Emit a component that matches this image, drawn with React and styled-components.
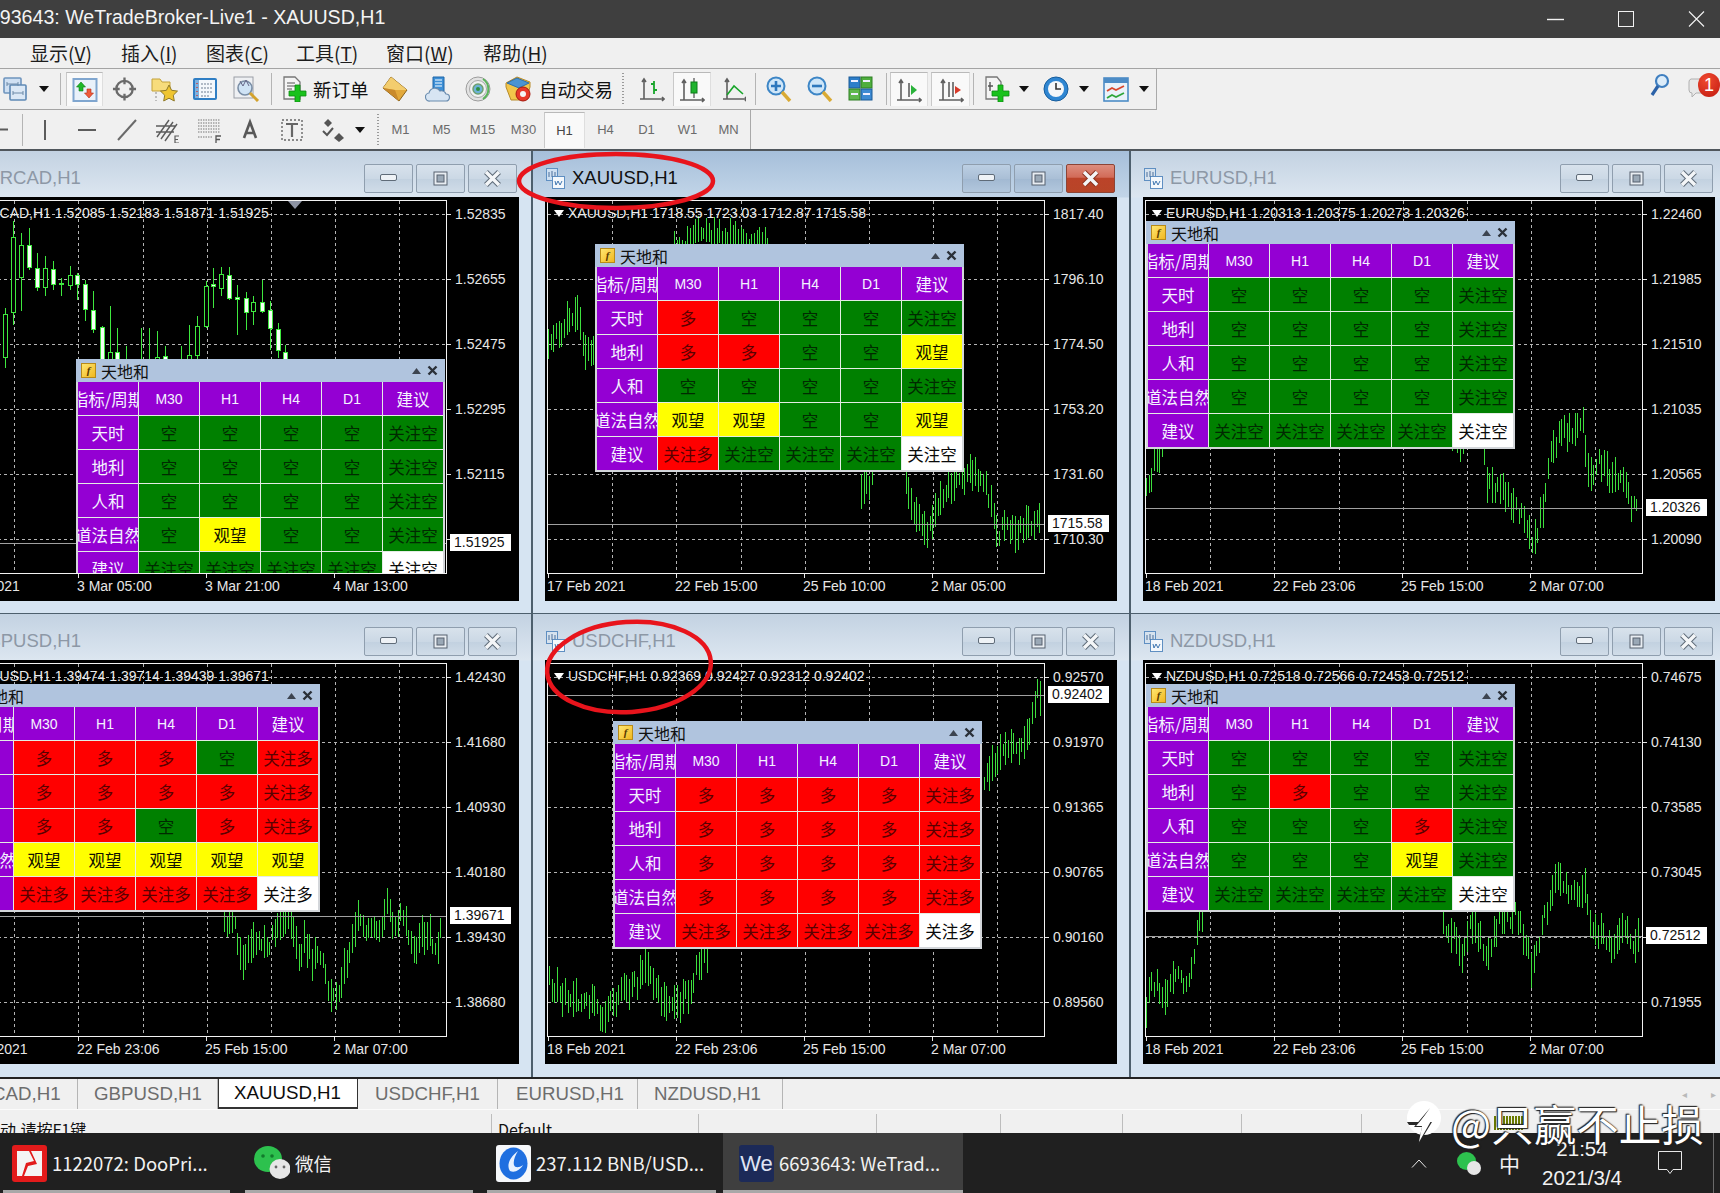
import React from "react";
import styled, { createGlobalStyle } from "styled-components";

const GlobalStyle = createGlobalStyle`
  html, body {
    margin: 0;
    padding: 0;
    background: #f0f0f0;
    overflow: hidden;
  }
  body {
    font-family: "Liberation Sans", "Noto Sans CJK SC", sans-serif;
  }
`;

const CJK = `"Noto Sans CJK SC", "Liberation Sans", sans-serif`;
const LATIN = `"Liberation Sans", "Noto Sans CJK SC", sans-serif`;

const Page = styled.div`
  position: relative;
  width: 1720px;
  height: 1193px;
  overflow: hidden;
  display: flex;
  flex-direction: column;
  background: #f0f0f0;
`;

/* ---------- title bar ---------- */
const TitleBar = styled.div`
  height: 38px;
  flex-shrink: 0;
  background: #3f3f3f;
  display: flex;
  align-items: center;
  overflow: hidden;
  color: #f4f4f4;
`;

const TitleText = styled.div`
  margin: -4px 0 0 -22px;
  font: 19.6px ${LATIN};
  white-space: nowrap;
`;

const WinControls = styled.div`
  margin-left: auto;
  display: flex;
  align-items: center;
  gap: 54px;
  padding-right: 15px;
`;

/* ---------- menu ---------- */
const MenuBar = styled.div`
  height: 30px;
  flex-shrink: 0;
  display: flex;
  align-items: center;
  padding-left: 30px;
  background: #f0f0f0;
`;

const MenuItem = styled.div`
  width: ${(p) => p.$w}px;
  font: 19px ${CJK};
  margin-top: -2px;
  color: #1c1c1c;
  white-space: nowrap;
`;

/* ---------- toolbars ---------- */
const ToolRow = styled.div`
  height: ${(p) => p.$h}px;
  flex-shrink: 0;
  display: flex;
  border-top: ${(p) => (p.$line ? "1px solid #a4a4a4" : "none")};
  box-sizing: border-box;
`;

const ToolGroup = styled.div`
  width: ${(p) => p.$w}px;
  flex-shrink: 0;
  display: flex;
  align-items: center;
  box-sizing: border-box;
  border-right: 1px solid #a9a9a9;
  border-bottom: ${(p) => (p.$line ? "1px solid #a4a4a4" : "none")};
`;

const Tool = styled.div`
  flex-shrink: 0;
  width: ${(p) => p.$w || 26}px;
  height: 34px;
  margin-left: ${(p) => p.$ml || 0}px;
  display: flex;
  align-items: center;
  justify-content: center;
  box-sizing: border-box;
  ${(p) =>
    p.$on &&
    `background: #f9f9f9; border-top: 1px solid #b9b9b9; border-left: 1px solid #c9c9c9; border-right: 1px solid #dedede;`}
`;

const ToolLabel = styled.div`
  flex-shrink: 0;
  width: ${(p) => p.$w}px;
  margin-left: ${(p) => p.$ml}px;
  font: 18.5px ${CJK};
  color: #111;
  white-space: nowrap;
`;

const Caret = styled.div`
  flex-shrink: 0;
  margin-left: ${(p) => p.$ml}px;
  width: 0;
  height: 0;
  border-left: 5px solid transparent;
  border-right: 5px solid transparent;
  border-top: 6px solid #111;
`;

const Sep = styled.div`
  flex-shrink: 0;
  margin-left: ${(p) => p.$ml}px;
  width: 1px;
  height: 32px;
  background: #b4b4b4;
`;

const Grip = styled(Sep)`
  width: 2px;
  background: repeating-linear-gradient(to bottom, #9a9a9a 0 1px, transparent 1px 3px);
`;

const TfButton = styled.div`
  flex-shrink: 0;
  width: 41px;
  height: 36px;
  box-sizing: border-box;
  display: flex;
  align-items: center;
  justify-content: center;
  font: 13px ${LATIN};
  color: ${(p) => (p.$on ? "#444" : "#6b6b6b")};
  ${(p) =>
    p.$on &&
    `background: #f9f9f9; border-top: 1px solid #b9b9b9; border-left: 1px solid #c9c9c9; border-right: 1px solid #dedede;`}
`;

const TfStrip = styled.div`
  display: flex;
  margin-left: 1px;
`;

const CutDash = styled.svg`
  flex-shrink: 0;
`;

const Badge = styled.div`
  position: absolute;
  top: 73px;
  right: 0;
  width: 22px;
  height: 24px;
  border-radius: 50%;
  background: radial-gradient(circle at 40% 30%, #f0492f, #c01a10);
  color: #fff;
  font: 18px ${LATIN};
  display: flex;
  align-items: center;
  justify-content: center;
`;

/* ---------- mdi windows ---------- */
const Mdi = styled.div`
  height: 928px;
  flex-shrink: 0;
  box-sizing: border-box;
  border-top: 2px solid #50565c;
  overflow: hidden;
  background: #4d5f6d;
  display: grid;
  grid-template-columns: repeat(3, 596px);
  grid-template-rows: 462px 463px;
  column-gap: 2px;
  row-gap: 1px;
  margin-left: -65px;
  width: 1800px;
`;

const Window = styled.div`
  display: flex;
  flex-direction: column;
  background: linear-gradient(
    to bottom,
    ${(p) => (p.$active ? "#a6bfda" : "#c3d2e2")} 0,
    ${(p) => (p.$active ? "#c2d5e8" : "#dce6f0")} 46px,
    #d6e4f2 47px
  );
`;

const WinHead = styled.div`
  height: 46px;
  flex-shrink: 0;
  box-sizing: border-box;
  display: flex;
  align-items: center;
  padding: 8px 14px 0 13px;
  gap: 7px;
`;

const WinName = styled.div`
  font: 18.5px ${LATIN};
  color: ${(p) => (p.$active ? "#101010" : "#8d98a6")};
  white-space: nowrap;
`;

const HeadButtons = styled.div`
  margin-left: auto;
  display: flex;
  gap: 3px;
`;

const HeadButton = styled.div`
  width: 49px;
  height: 29px;
  box-sizing: border-box;
  border: 1px solid ${(p) => (p.$danger ? "#8c4436" : "#8f9eae")};
  border-radius: 2px;
  display: flex;
  align-items: center;
  justify-content: center;
  background: ${(p) =>
    p.$danger
      ? "linear-gradient(to bottom, #dd8d7e 0, #d26b58 45%, #bb4329 50%, #b84528 100%)"
      : p.$active
      ? "linear-gradient(to bottom, #bccfe3 0, #aabfd6 50%, #a2b9d2 52%, #b2c7dd 100%)"
      : "linear-gradient(to bottom, #d8e2ec 0, #cbd8e5 50%, #c2d1e0 52%, #d0dce8 100%)"};
`;

const Chart = styled.div`
  margin: 0 12px;
  height: 404px;
  flex-shrink: 0;
  box-sizing: border-box;
  padding: 3px 0 0 2px;
  background: #000;
  display: grid;
  grid-template-columns: 498px 1fr;
  grid-template-rows: 374px 1fr;
`;

const Plot = styled.div`
  position: relative;
  border: 1px solid #f2f2f2;
  box-sizing: border-box;
  overflow: hidden;
`;

const PlotSvg = styled.svg`
  position: absolute;
  left: 0;
  top: 0;
  display: block;
`;

const ChartInfo = styled.div`
  position: absolute;
  left: 20px;
  top: 4px;
  font: 14px ${LATIN};
  color: #ececec;
  white-space: nowrap;
  &::before {
    content: "";
    position: absolute;
    left: -14px;
    top: 5px;
    border-left: 5px solid transparent;
    border-right: 5px solid transparent;
    border-top: 7px solid #fff;
  }
`;

const PriceAxis = styled.div`
  position: relative;
  display: flex;
  flex-direction: column;
  margin-top: -18px;
  height: 392px;
`;

const PriceTick = styled.div`
  position: relative;
  flex-shrink: 0;
  height: 65px;
  line-height: 65px;
  padding-left: 8px;
  font: 14px/65px ${LATIN};
  color: #e6e6e6;
  &::before {
    content: "";
    position: absolute;
    left: 0;
    top: 32px;
    width: 4px;
    height: 1px;
    background: #e6e6e6;
  }
`;

const CurrentPrice = styled.div`
  position: absolute;
  left: 3px;
  top: ${(p) => p.$y + 18 - 9}px;
  width: 61px;
  height: 17px;
  box-sizing: border-box;
  padding-left: 4px;
  background: #fff;
  color: #111;
  font: 14px/17px ${LATIN};
`;

const TimeAxis = styled.div`
  grid-column: 1 / -1;
  display: flex;
`;

const TimeTick = styled.div`
  position: relative;
  width: 128px;
  flex-shrink: 0;
  padding-top: 4px;
  font: 14px ${LATIN};
  color: #e6e6e6;
  white-space: nowrap;
  &::before {
    content: "";
    position: absolute;
    left: 1px;
    top: 0;
    width: 1px;
    height: 4px;
    background: #e6e6e6;
  }
`;

/* ---------- indicator panel ---------- */
const Panel = styled.div`
  position: absolute;
  left: ${(p) => p.$left}px;
  top: ${(p) => p.$top}px;
  width: 369px;
  box-sizing: border-box;
  padding: 0 2px 2px;
  background: #d3d6da;
`;

const PanelHead = styled.div`
  height: 23px;
  margin: 0 -2px;
  padding: 0 7px 0 5px;
  background: #b0c4de;
  display: flex;
  align-items: center;
  color: #111;
  font: 16px ${CJK};
`;

const PanelLogo = styled.span`
  width: 13px;
  height: 13px;
  margin-right: 5px;
  border: 1px solid #b78a18;
  background: linear-gradient(135deg, #ffe670, #f0b820);
  color: #5a3a00;
  font: italic bold 11px/13px "Liberation Serif", serif;
  text-align: center;
`;

const PanelTools = styled.div`
  margin-left: auto;
  display: flex;
  align-items: center;
  gap: 6px;
`;

const PanelGrid = styled.div`
  display: grid;
  grid-template-columns: repeat(6, 60px);
  grid-auto-rows: 33px;
  gap: 1px;
  background: #e4ece4;
`;

const CELL_BG = {
  head: "#9400d3",
  long: "#ff0000",
  short: "#008000",
  wait: "#ffff00",
  last: "#ffffff",
};

const CELL_FG = {
  head: "#f4f4ff",
  long: "#5a0000",
  short: "#002a00",
  wait: "#111100",
  last: "#0a0a0a",
};

const Cell = styled.div`
  display: flex;
  align-items: center;
  justify-content: center;
  overflow: hidden;
  white-space: nowrap;
  font: 16.5px ${CJK};
  background: ${(p) => CELL_BG[p.$kind]};
  color: ${(p) => CELL_FG[p.$kind]};
  ${(p) => p.$latin && `font: 14px ${LATIN};`}
`;

/* ---------- tabs, status, taskbar ---------- */
const TabBar = styled.div`
  height: 33px;
  flex-shrink: 0;
  box-sizing: border-box;
  border-top: 2px solid #222;
  display: flex;
  align-items: stretch;
  position: relative;
  background: #f0f0f0;
  border-bottom: 1px solid #fbfbfb;
`;

const Tab = styled.div`
  flex-shrink: 0;
  width: ${(p) => p.$w}px;
  box-sizing: border-box;
  display: flex;
  align-items: center;
  font: 18.7px ${LATIN};
  white-space: nowrap;
  overflow: hidden;
  padding-left: ${(p) => p.$pad}px;
  color: ${(p) => (p.$active ? "#0c0c0c" : "#6d6d6d")};
  border-right: ${(p) => (p.$active ? "none" : "1px solid #b5b5b5")};
  ${(p) =>
    p.$active &&
    `background: #fff; border: 1px solid #333; border-top: none; border-bottom: 2px solid #333;`}
`;

const CutTabText = styled.span`
  margin-left: -8px;
`;

const TabArrows = styled.div`
  margin-left: auto;
  display: flex;
  align-items: center;
  gap: 24px;
  padding-right: 4px;
  color: #b9b9b9;
  font: 10px ${LATIN};
`;

const StatusBar = styled.div`
  height: 23px;
  flex-shrink: 0;
  display: flex;
  overflow: hidden;
  background: #f0f0f0;
`;

const StatusCell = styled.div`
  flex-shrink: 0;
  width: ${(p) => p.$w}px;
  box-sizing: border-box;
  padding: 3px 0 0 ${(p) => p.$pad || 0}px;
  border-right: 1px solid #bdbdbd;
  margin-top: 4px;
  font: 16px ${CJK};
  color: #111;
  white-space: nowrap;
  overflow: hidden;
`;

const ConnBar = styled.div`
  margin: 6px 0 0 132px;
  width: 30px;
  height: 14px;
  background: repeating-linear-gradient(to right, #6a7a00 0 2px, #f0f0f0 2px 3px);
`;

const Taskbar = styled.div`
  flex: 1;
  background: #202020;
  display: flex;
  align-items: stretch;
  color: #f2f2f2;
`;

const TaskItem = styled.div`
  position: relative;
  flex-shrink: 0;
  margin-left: ${(p) => p.$ml}px;
  width: ${(p) => p.$w}px;
  box-sizing: border-box;
  padding-left: ${(p) => p.$pad}px;
  display: flex;
  align-items: center;
  gap: 5px;
  font: 18.5px ${CJK};
  white-space: nowrap;
  background: ${(p) => (p.$active ? "#3f3f3f" : "transparent")};
  &::after {
    content: "";
    position: absolute;
    left: 0;
    right: 0;
    bottom: 0;
    height: 3px;
    background: #a8a8a8;
  }
`;

const TaskTile = styled.div`
  width: 35px;
  height: 37px;
  border-radius: 3px;
  background: ${(p) => p.$bg};
  color: #dfe4f4;
  font: 22px/37px ${LATIN};
  text-align: center;
  overflow: hidden;
  flex-shrink: 0;
`;

const Tray = styled.div`
  flex-shrink: 0;
  margin-left: ${(p) => p.$ml}px;
  display: flex;
  align-items: center;
  font: ${(p) => p.$size || 18}px ${CJK};
`;

const Clock = styled.div`
  margin-left: 17px;
  width: 90px;
  flex-shrink: 0;
  display: flex;
  flex-direction: column;
  align-items: center;
  justify-content: space-between;
  padding: 4px 0 3px;
  font: 20.5px ${LATIN};
  box-sizing: border-box;
`;

const TrayEdge = styled.div`
  margin-left: 31px;
  width: 1px;
  background: #6a6a6a;
`;

/* ---------- overlays ---------- */
const Circle = styled.svg`
  position: absolute;
  left: ${(p) => p.$x}px;
  top: ${(p) => p.$y}px;
  overflow: visible;
  pointer-events: none;
`;

const Watermark = styled.div`
  position: absolute;
  left: 1406px;
  top: 1100px;
  display: flex;
  align-items: center;
  gap: 9px;
  color: #fff;
  font: 42.5px/1 ${CJK};
  white-space: nowrap;
  text-shadow: 0 0 2px #222, 1px 1px 1px #222, -1px -1px 1px #222;
`;

/* ---------- toolbar icons ---------- */
const Svg = ({ w = 26, h = 26, children }) => (
  <svg width={w} height={h} viewBox={`0 0 ${w} ${h}`} fill="none">
    {children}
  </svg>
);

const PlusMark = ({ x = 0, y = 0, c = "#19c21c" }) => (
  <path
    d={`M${x + 6} ${y}h5v6h6v5h-6v6h-5v-6h-6v-5h6z`}
    fill={c}
    stroke="#0c8a12"
    strokeWidth=".8"
  />
);

const Axis = () => (
  <path d="M5 4v19M1 23h24M3 6l2-3 2 3M23 21l2 2-2 2" stroke="#5f5f5f" strokeWidth="1.6" />
);

const Icons = {
  cascade: (
    <Svg w={24}>
      <rect x="1" y="2" width="17" height="15" rx="1" fill="#cfe0f3" stroke="#6e94bd" strokeWidth="1.6" />
      <rect x="7" y="9" width="16" height="15" rx="1" fill="#dbe8f6" stroke="#5f89b5" strokeWidth="1.6" />
      <path d="M4 8h11M4 6v4M15 6v4M10 17h10M10 15v4M20 15v4" stroke="#6d8aa8" />
    </Svg>
  ),
  market: (
    <Svg>
      <rect x="1.5" y="2" width="23" height="22" fill="#e9f1fa" stroke="#80a6cf" strokeWidth="2" />
      <path d="M9 5l4.5 5H11v4H7v-4H4.5z" fill="#1fb82a" stroke="#0e7d17" strokeWidth=".6" />
      <path d="M17 21l-4.5-5H15v-4h4v4h2.5z" fill="#ee5a3a" stroke="#b42e18" strokeWidth=".6" />
    </Svg>
  ),
  cross: (
    <Svg>
      <circle cx="13" cy="13" r="8.5" stroke="#6a6a6a" strokeWidth="2.4" />
      <path d="M13 1v7M13 18v7M1 13h7M18 13h7" stroke="#6a6a6a" strokeWidth="2.4" />
    </Svg>
  ),
  folder: (
    <Svg w={27}>
      <path d="M1 3h8l2 3h8v9H1z" fill="#f7dc7c" stroke="#c4a23a" />
      <path d="M18 9l2.6 5.3 5.9.8-4.2 4.1 1 5.8-5.3-2.8-5.3 2.8 1-5.8-4.2-4.1 5.9-.8z" fill="#efc531" stroke="#8f7a2a" />
      <path d="M5 16v9" stroke="#888" strokeDasharray="2 2" />
    </Svg>
  ),
  nav: (
    <Svg>
      <rect x="1" y="2" width="24" height="22" rx="2" fill="#2f7ec4" />
      <rect x="3" y="4" width="20" height="18" fill="#f4f8fc" />
      <rect x="3" y="4" width="4" height="18" fill="#7fb2df" />
      <path d="M9 8h12M9 12h12M9 16h12M9 20h8" stroke="#6f7f92" strokeDasharray="2 1" />
      <path d="M5 7v14" stroke="#c44" strokeDasharray="1 3" strokeWidth="1.5" />
    </Svg>
  ),
  tester: (
    <Svg w={27}>
      <rect x="1" y="1" width="19" height="21" fill="#eef0f3" stroke="#9a9ea6" />
      <circle cx="12" cy="12" r="7" fill="#cfe3f5" stroke="#7a8ea6" strokeWidth="1.6" />
      <path d="M7 5l3 5 3-6 3 6" stroke="#668" />
      <path d="M17 17l8 8" stroke="#d3a22c" strokeWidth="3" />
    </Svg>
  ),
  order: (
    <Svg w={25}>
      <path d="M2 1h11l5 5v17H2z" fill="#f4f4f4" stroke="#777" strokeWidth="1.3" />
      <path d="M5 7h8M5 10h8M5 13h5" stroke="#555" strokeWidth="1.2" />
      <PlusMark x={7} y={9} />
    </Svg>
  ),
  diamond: (
    <Svg w={28}>
      <path d="M10 1l16 13-8 11L2 12z" fill="#e3a93b" stroke="#87611a" />
      <path d="M10 1l16 13H14L2 12z" fill="#f3cd6e" />
      <path d="M2 12l12 2 4 11z" fill="#c98a2c" />
    </Svg>
  ),
  db: (
    <Svg>
      <path d="M8 1h11v14H8z" fill="#3d8fd6" stroke="#1e67a8" />
      <path d="M10 4h7M10 7h7M10 10h7" stroke="#bcdcf5" strokeWidth="1.4" />
      <path d="M5 25a4 4 0 0 1-1-8 6 6 0 0 1 11-2 5 5 0 0 1 6 3 3.5 3.5 0 0 1 0 7z" fill="#d7e5f3" stroke="#6a8cae" strokeWidth="1.2" />
    </Svg>
  ),
  signal: (
    <Svg>
      <circle cx="13" cy="13" r="12" fill="#e2e2e2" stroke="#9c9c9c" />
      <circle cx="13" cy="13" r="8.5" fill="#f2f2f2" stroke="#a8a8a8" />
      <circle cx="13" cy="13" r="5" fill="#6db2d8" stroke="#6f9f6f" strokeWidth="1.5" />
      <path d="M18 3a12 12 0 0 1 0 20" stroke="#5ab45a" strokeWidth="2" />
      <circle cx="13" cy="13" r="2" fill="#2f8f3f" />
    </Svg>
  ),
  auto: (
    <Svg>
      <path d="M1 7l11-6 13 5v5l-4 13H6L1 11z" fill="#f2c64a" stroke="#b78a28" />
      <path d="M2 7l10-5 12 5-10 5z" fill="#4c94d2" stroke="#2f6ea8" />
      <circle cx="18" cy="18" r="7" fill="#e8392a" stroke="#a61a10" />
      <circle cx="18" cy="18" r="3" fill="#f5f5f5" />
    </Svg>
  ),
  bars: (
    <Svg>
      <Axis />
      <path d="M15 5v13M12 8h3M15 14h3" stroke="#18a52a" strokeWidth="1.8" />
    </Svg>
  ),
  candle: (
    <Svg>
      <Axis />
      <path d="M15 1v20" stroke="#666" strokeWidth="1.4" />
      <rect x="12" y="5" width="6" height="11" fill="#1fb32e" stroke="#0d7c18" />
    </Svg>
  ),
  line: (
    <Svg w={24}>
      <Axis />
      <path d="M5 19l7-9 9 8" stroke="#18a52a" strokeWidth="1.6" />
    </Svg>
  ),
  zoomIn: (
    <Svg>
      <circle cx="10" cy="10" r="8.5" fill="#cfe6f8" stroke="#3d86c6" strokeWidth="2" />
      <path d="M10 5v10M5 10h10" stroke="#2e78bd" strokeWidth="2.6" />
      <path d="M16 16l8 9" stroke="#d9aa34" strokeWidth="3.4" />
    </Svg>
  ),
  zoomOut: (
    <Svg>
      <circle cx="10" cy="10" r="8.5" fill="#cfe6f8" stroke="#3d86c6" strokeWidth="2" />
      <path d="M5 10h10" stroke="#2e78bd" strokeWidth="2.6" />
      <path d="M16 16l8 9" stroke="#d9aa34" strokeWidth="3.4" />
    </Svg>
  ),
  tile: (
    <Svg w={25}>
      <rect x="1" y="1" width="11" height="11" fill="#2d7ec9" stroke="#1a5a96" />
      <rect x="13" y="1" width="11" height="11" fill="#4fae3e" stroke="#2d7e22" />
      <rect x="1" y="13" width="11" height="11" fill="#5fb84d" stroke="#2d7e22" />
      <rect x="13" y="13" width="11" height="11" fill="#3d8ad2" stroke="#1a5a96" />
      <path d="M3 5h7M15 5h7M3 18h7M15 18h7" stroke="#eef" strokeWidth="2" />
    </Svg>
  ),
  scroll: (
    <Svg>
      <Axis />
      <path d="M13 6v14" stroke="#555" strokeWidth="1.5" />
      <path d="M15 8l6 5-6 5z" fill="#2ab23a" />
    </Svg>
  ),
  shift: (
    <Svg>
      <Axis />
      <path d="M11 5v15M15 5v15" stroke="#555" strokeWidth="1.5" />
      <path d="M23 13l-6-4v8z" fill="#d83a2a" />
    </Svg>
  ),
  newChart: (
    <Svg>
      <path d="M2 1h11l4 5v17H2z" fill="#f4f4f4" stroke="#777" strokeWidth="1.3" />
      <path d="M6 6v9M4 10h5" stroke="#555" strokeWidth="1.4" />
      <PlusMark x={8} y={9} />
    </Svg>
  ),
  clock: (
    <Svg>
      <circle cx="13" cy="13" r="12" fill="#2f86d2" stroke="#175d9c" />
      <circle cx="13" cy="13" r="8" fill="#f5f7f9" />
      <path d="M13 7v6h5" stroke="#333" strokeWidth="1.6" />
    </Svg>
  ),
  template: (
    <Svg>
      <rect x="1" y="2" width="24" height="23" fill="#eaf2fa" stroke="#4d8cc6" strokeWidth="1.6" />
      <rect x="1" y="2" width="24" height="5" fill="#4d8cc6" />
      <path d="M4 15l5-3 4 2 8-4" stroke="#d8462c" strokeWidth="1.8" />
      <path d="M4 22l5-3 4 2 8-4" stroke="#2fa63a" strokeWidth="1.8" />
    </Svg>
  ),
  search: (
    <Svg w={20}>
      <circle cx="12" cy="8" r="6" fill="#dcecf9" stroke="#3f7fc0" strokeWidth="2.2" />
      <path d="M8 13l-6 9" stroke="#2c62a8" strokeWidth="3.2" />
    </Svg>
  ),
  chat: (
    <Svg w={22}>
      <path d="M3 6h13a3 3 0 0 1 3 3v8a3 3 0 0 1-3 3h-8l-4 4v-4a3 3 0 0 1-3-3V9a3 3 0 0 1 2-3z" fill="#e8e8e8" stroke="#b0b0b0" />
    </Svg>
  ),
  vert: (
    <Svg>
      <path d="M13 3v20" stroke="#5c5c5c" strokeWidth="2" />
    </Svg>
  ),
  horiz: (
    <Svg>
      <path d="M4 13h18" stroke="#5c5c5c" strokeWidth="2" />
    </Svg>
  ),
  diag: (
    <Svg>
      <path d="M4 23L22 3" stroke="#6a6a6a" strokeWidth="2" />
    </Svg>
  ),
  fibo: (
    <Svg>
      <path d="M2 20L14 3M6 22L18 5M10 24L22 7M1 9h20M1 15h18" stroke="#5c5c5c" strokeWidth="1.4" />
      <path d="M24 19h-4v7h4M20 22.5h3" stroke="#5c5c5c" strokeWidth="1.2" />
    </Svg>
  ),
  gridF: (
    <Svg>
      <path d="M2 3h22M2 6h22M2 9h22M2 12h22M2 15h22M2 20h14" stroke="#777" strokeWidth="1.1" strokeDasharray="1.5 1" />
      <path d="M25 19h-5v7M20 22.5h4" stroke="#555" strokeWidth="1.3" />
    </Svg>
  ),
  textA: (
    <Svg>
      <path d="M7 21L13 5l6 16M9 16h8" stroke="#585858" strokeWidth="2.6" />
    </Svg>
  ),
  textT: (
    <Svg>
      <rect x="3" y="3" width="20" height="20" stroke="#666" strokeDasharray="2 2" strokeWidth="1.4" />
      <path d="M7 7h12M13 7v13" stroke="#666" strokeWidth="2.2" />
    </Svg>
  ),
  marks: (
    <Svg>
      <path d="M8 2l4 4-4 4-4-4z" fill="#555" />
      <path d="M3 14l4 4 6-7" stroke="#555" strokeWidth="2" />
      <path d="M19 16l5 5-5 4-5-4z" fill="#555" />
    </Svg>
  ),
};

const WinDocIcon = ({ active }) => (
  <svg width="19" height="21" viewBox="0 0 19 21" fill="none">
    <rect x=".5" y=".5" width="11" height="12" fill={active ? "#cfe0f2" : "#d6e2ee"} stroke="#5f8fc2" />
    <rect x="6.5" y="8.5" width="12" height="12" fill="#f4f8fc" stroke="#5f8fc2" />
    <path d="M3 4v5M6 3v6M9 4v4" stroke="#4a6f9a" />
    <path d="M9 13l1 4 2-4 2 4 2-4" stroke="#3f76b0" />
  </svg>
);

const MinGlyph = () => (
  <svg width="17" height="8" viewBox="0 0 17 8">
    <rect x=".5" y=".5" width="16" height="6" rx="1.5" fill="#eef2f6" stroke="#5f6b78" />
  </svg>
);

const MaxGlyph = () => (
  <svg width="15" height="15" viewBox="0 0 15 15" fill="none">
    <rect x="1" y="1" width="13" height="13" fill="#e8edf2" stroke="#56616e" />
    <rect x="4" y="4" width="7" height="7" fill="#9aa8b6" stroke="#56616e" />
  </svg>
);

const CloseGlyph = ({ danger }) => (
  <svg width="19" height="17" viewBox="0 0 19 17" fill="none">
    <path d="M3 2l13 13M16 2L3 15" stroke={danger ? "#8a3422" : "#5f6b78"} strokeWidth="5.4" />
    <path d="M3 2l13 13M16 2L3 15" stroke="#f4f6f8" strokeWidth="3.4" />
  </svg>
);

/* ---------- chart data ---------- */
const TICKS_X = [64, 128, 193, 257, 321, 385, 449];
const TICKS_Y = [14, 79, 144, 209, 274, 339];

const makeRand = (start) => {
  let seed = start;
  return () => {
    seed = (seed * 16807) % 2147483647;
    return seed / 2147483647;
  };
};

// turn a rough (x, mid price) trace into a path of thin vertical bars
const barPath = (traces, seedStart, len = 28) => {
  const rand = makeRand(seedStart);
  let d = "";
  traces.forEach((trace) => {
    let seg = 0;
    for (let x = trace[0][0]; x <= trace[trace.length - 1][0]; x += 2.67) {
      while (seg < trace.length - 2 && x > trace[seg + 1][0]) seg++;
      const [x0, y0] = trace[seg];
      const [x1, y1] = trace[seg + 1];
      const mid = y0 + ((y1 - y0) * (x - x0)) / (x1 - x0) + (rand() - 0.5) * 14;
      const half = (len / 2) * (0.4 + rand() * 0.9);
      d += `M${Math.round(x) + 0.5} ${Math.round(mid - half)}V${Math.round(mid + half)}`;
    }
  });
  return d;
};

// x, wick top, wick bottom, body top, body bottom, solid body
const CANDLES = [
  [15, 465, 645, 485, 615, 0], [39, 205, 515, 255, 480, 0], [62, 240, 475, 280, 375, 0],
  [85, 225, 350, 280, 345, 1], [108, 300, 415, 347, 405, 1], [132, 310, 430, 348, 405, 0],
  [155, 325, 410, 350, 395, 1], [178, 375, 430, 392, 396, 0], [202, 340, 410, 368, 398, 0],
  [225, 360, 440, 370, 397, 1], [248, 380, 505, 395, 472, 1], [271, 415, 540, 473, 532, 1],
  [295, 520, 660, 525, 640, 1], [318, 460, 660, 600, 640, 0], [341, 525, 660, 600, 640, 1],
  [365, 580, 660, 625, 650, 0], [410, 525, 660, 0, 0, 0], [434, 525, 660, 0, 0, 0],
  [457, 535, 660, 615, 650, 0], [480, 580, 660, 613, 650, 1], [527, 580, 660, 0, 0, 0],
  [550, 515, 660, 610, 650, 0], [573, 490, 620, 523, 610, 0], [597, 385, 525, 403, 523, 0],
  [620, 345, 465, 397, 403, 1], [643, 343, 430, 365, 407, 0], [666, 342, 440, 368, 437, 1],
  [689, 395, 545, 435, 442, 1], [713, 418, 530, 438, 480, 1], [736, 430, 515, 450, 478, 0],
  [760, 380, 480, 450, 478, 1], [783, 445, 590, 473, 528, 1], [806, 510, 615, 530, 595, 1],
  [828, 575, 660, 600, 650, 1],
];

const CandleLayer = () => (
  <g stroke="#3ee83e" strokeWidth="1" shapeRendering="crispEdges">
    {CANDLES.map(([xz, wt, wb, bt, bb, solid]) => {
      const x = Math.round(xz / 2.904 + 50) + 0.5;
      const y = (v) => Math.round(v / 3 - 49) + 0.5;
      return (
        <g key={xz}>
          <path d={`M${x} ${y(wt)}V${y(wb)}`} />
          {bb > 0 && (
            <rect
              x={x - 2}
              y={y(bt)}
              width="4"
              height={y(bb) - y(bt)}
              fill={solid ? "#f6fff6" : "#000"}
            />
          )}
        </g>
      );
    })}
  </g>
);

const SHORT_ROW = "空 空 空 空 关注空";
const SHORT_END = "关注空 关注空 关注空 关注空 关注空";
const LONG_ROW = "多 多 多 多 关注多";
const LONG_END = "关注多 关注多 关注多 关注多 关注多";

const WINDOWS = [
  {
    name: "EURCAD,H1",
    info: "EURCAD,H1 1.52085 1.52183 1.51871 1.51925",
    prices: ["1.52835", "1.52655", "1.52475", "1.52295", "1.52115", ""],
    current: "1.51925",
    currentY: 343,
    times: ["2 Mar 2021", "3 Mar 05:00", "3 Mar 21:00", "4 Mar 13:00"],
    candles: true,
    marker: true,
    panel: [126, 158],
    rows: [SHORT_ROW, SHORT_ROW, SHORT_ROW, "空 观望 空 空 关注空", SHORT_END],
  },
  {
    name: "XAUUSD,H1",
    active: true,
    info: "XAUUSD,H1 1718.55 1723.03 1712.87 1715.58",
    prices: ["1817.40", "1796.10", "1774.50", "1753.20", "1731.60", "1710.30"],
    current: "1715.58",
    currentY: 324,
    times: ["17 Feb 2021", "22 Feb 15:00", "25 Feb 10:00", "2 Mar 05:00"],
    traces: [
      [[0, 150], [8, 135], [23, 115], [30, 110], [36, 145], [50, 150]],
      [[126, 52], [150, 34], [180, 38], [216, 44], [224, 60]],
      [[313, 291], [322, 280], [326, 258]],
      [[355, 258], [361, 301], [380, 331], [399, 286], [426, 270], [441, 294], [450, 342], [456, 320], [467, 334], [482, 324], [493, 316]],
    ],
    panel: [47, 43],
    rows: [
      "多 空 空 空 关注空",
      "多 多 空 空 观望",
      SHORT_ROW,
      "观望 观望 空 空 观望",
      "关注多 关注空 关注空 关注空 关注空",
    ],
  },
  {
    name: "EURUSD,H1",
    info: "EURUSD,H1 1.20313 1.20375 1.20273 1.20326",
    prices: ["1.22460", "1.21985", "1.21510", "1.21035", "1.20565", "1.20090"],
    current: "1.20326",
    currentY: 308,
    times: ["18 Feb 2021", "22 Feb 23:06", "25 Feb 15:00", "2 Mar 07:00"],
    traces: [
      [[0, 293], [10, 258], [18, 245]],
      [[306, 240], [316, 245], [320, 225]],
      [[338, 250], [340, 286], [361, 293], [380, 323], [387, 348], [395, 313], [401, 280], [404, 245], [418, 232], [433, 228], [436, 215], [442, 268], [446, 285], [451, 255], [465, 280], [478, 280], [485, 302], [492, 307]],
    ],
    panel: [0, 20],
    rows: [SHORT_ROW, SHORT_ROW, SHORT_ROW, SHORT_ROW, SHORT_END],
  },
  {
    name: "GBPUSD,H1",
    info: "GBPUSD,H1 1.39474 1.39714 1.39439 1.39671",
    prices: ["1.42430", "1.41680", "1.40930", "1.40180", "1.39430", "1.38680"],
    current: "1.39671",
    currentY: 253,
    times: ["18 Feb 2021", "22 Feb 23:06", "25 Feb 15:00", "2 Mar 07:00"],
    traces: [
      [[274, 259], [284, 262], [288, 287], [295, 300], [305, 272], [318, 282], [332, 253], [342, 268], [348, 292], [355, 277], [362, 295], [371, 295], [379, 327], [389, 332], [396, 300], [401, 274], [408, 254], [416, 263], [430, 272], [436, 239], [443, 259], [450, 250], [458, 266], [465, 283], [479, 263], [485, 286], [492, 265]],
    ],
    panel: [1, 20],
    rows: [
      "多 多 多 空 关注多",
      LONG_ROW,
      "多 多 空 多 关注多",
      "观望 观望 观望 观望 观望",
      LONG_END,
    ],
  },
  {
    name: "USDCHF,H1",
    info: "USDCHF,H1 0.92369 0.92427 0.92312 0.92402",
    prices: ["0.92570", "0.91970", "0.91365", "0.90765", "0.90160", "0.89560"],
    current: "0.92402",
    currentY: 32,
    times: ["18 Feb 2021", "22 Feb 23:06", "25 Feb 15:00", "2 Mar 07:00"],
    traces: [
      [[1, 318], [9, 327], [28, 335], [43, 340], [54, 352], [68, 335], [88, 320], [100, 303], [111, 332], [133, 340], [145, 318], [148, 297], [160, 290]],
      [[436, 119], [446, 100], [459, 83], [476, 83], [481, 72], [484, 45], [489, 30], [493, 37]],
    ],
    panel: [65, 57],
    rows: [LONG_ROW, LONG_ROW, LONG_ROW, LONG_ROW, LONG_END],
  },
  {
    name: "NZDUSD,H1",
    info: "NZDUSD,H1 0.72518 0.72566 0.72453 0.72512",
    prices: ["0.74675", "0.74130", "0.73585", "0.73045", "", "0.71955"],
    current: "0.72512",
    currentY: 273,
    times: ["18 Feb 2021", "22 Feb 23:06", "25 Feb 15:00", "2 Mar 07:00"],
    traces: [
      [[0, 355], [4, 320], [11, 318], [17, 343], [23, 325], [32, 310], [40, 325], [47, 303], [51, 273], [56, 247], [60, 225]],
      [[297, 259], [308, 273], [316, 292], [324, 250], [342, 294], [352, 257], [369, 250], [380, 278], [386, 307], [395, 265], [403, 239], [410, 217], [421, 222], [431, 233], [438, 223], [446, 272], [455, 267], [465, 289], [480, 260], [487, 283], [492, 270]],
    ],
    panel: [0, 20],
    rows: [
      SHORT_ROW,
      "空 多 空 空 关注空",
      "空 空 空 多 关注空",
      "空 空 空 观望 关注空",
      SHORT_END,
    ],
  },
];

const cellKind = (text) => {
  if (text.includes("多")) return "long";
  if (text.includes("空")) return "short";
  return "wait";
};

const SignalPanel = ({ left, top, rows }) => {
  const heads = ["指标/周期", "M30", "H1", "H4", "D1", "建议"];
  const labels = ["天时", "地利", "人和", "道法自然", "建议"];
  return (
    <Panel $left={left} $top={top}>
      <PanelHead>
        <PanelLogo>f</PanelLogo>
        天地和
        <PanelTools>
          <svg width="9" height="6" viewBox="0 0 9 6">
            <path d="M4.5 0L9 6H0z" fill="#3c4450" />
          </svg>
          <svg width="11" height="11" viewBox="0 0 11 11">
            <path d="M1.5 1.5l8 8M9.5 1.5l-8 8" stroke="#2a3038" strokeWidth="2.4" />
          </svg>
        </PanelTools>
      </PanelHead>
      <PanelGrid>
        {heads.map((h) => (
          <Cell key={h} $kind="head" $latin={/^[A-Z]/.test(h)}>
            {h}
          </Cell>
        ))}
        {rows.map((row, r) => (
          <React.Fragment key={labels[r]}>
            <Cell $kind="head">{labels[r]}</Cell>
            {row.split(" ").map((text, c) => (
              <Cell key={c} $kind={r === 4 && c === 4 ? "last" : cellKind(text)}>
                {text}
              </Cell>
            ))}
          </React.Fragment>
        ))}
      </PanelGrid>
    </Panel>
  );
};

const ChartWindow = ({ data, seed }) => (
  <Window $active={data.active}>
    <WinHead>
      <WinDocIcon active={data.active} />
      <WinName $active={data.active}>{data.name}</WinName>
      <HeadButtons>
        <HeadButton $active={data.active}>
          <MinGlyph />
        </HeadButton>
        <HeadButton $active={data.active}>
          <MaxGlyph />
        </HeadButton>
        <HeadButton $active={data.active} $danger={data.active}>
          <CloseGlyph danger={data.active} />
        </HeadButton>
      </HeadButtons>
    </WinHead>
    <Chart>
      <Plot>
        <PlotSvg width="496" height="372" viewBox="0 0 496 372" fill="none">
          <g stroke="#b4b4b4" strokeDasharray="3 3" shapeRendering="crispEdges">
            {TICKS_X.map((x) => (
              <path key={x} d={`M${x + 0.5} 0V372`} />
            ))}
            {TICKS_Y.map((y) => (
              <path key={y} d={`M0 ${y - 0.5}H496`} />
            ))}
          </g>
          {data.candles ? (
            <CandleLayer />
          ) : (
            <path
              d={barPath(data.traces, seed)}
              stroke="#3ddf3d"
              strokeWidth="1"
              shapeRendering="crispEdges"
            />
          )}
          <path d={`M0 ${data.currentY - 0.5}H496`} stroke="#a0a0a0" shapeRendering="crispEdges" />
          {data.marker && <path d="M338 0h14l-7 8z" fill="#8d93a3" />}
        </PlotSvg>
        <ChartInfo>{data.info}</ChartInfo>
        <SignalPanel left={data.panel[0]} top={data.panel[1]} rows={data.rows} />
      </Plot>
      <PriceAxis>
        {data.prices.map((p, i) => (
          <PriceTick key={i}>{p}</PriceTick>
        ))}
        <CurrentPrice $y={data.currentY}>{data.current}</CurrentPrice>
      </PriceAxis>
      <TimeAxis>
        {data.times.map((t) => (
          <TimeTick key={t}>{t}</TimeTick>
        ))}
      </TimeAxis>
    </Chart>
  </Window>
);

const MENU = [
  ["显示", "V", 91],
  ["插入", "I", 85],
  ["图表", "C", 90],
  ["工具", "T", 90],
  ["窗口", "W", 97],
  ["帮助", "H", 70],
];

const TIMEFRAMES = ["M1", "M5", "M15", "M30", "H1", "H4", "D1", "W1", "MN"];

export default function App() {
  return (
    <Page>
      <GlobalStyle />
      <TitleBar>
        <TitleText>6693643: WeTradeBroker-Live1 - XAUUSD,H1</TitleText>
        <WinControls>
          <svg width="17" height="3" viewBox="0 0 17 3">
            <path d="M0 1.5h17" stroke="#f2f2f2" strokeWidth="1.4" />
          </svg>
          <svg width="16" height="16" viewBox="0 0 16 16" fill="none">
            <rect x=".5" y=".5" width="15" height="15" stroke="#f2f2f2" />
          </svg>
          <svg width="17" height="16" viewBox="0 0 17 16">
            <path d="M1 .5l15 15M16 .5l-15 15" stroke="#f2f2f2" strokeWidth="1.1" />
          </svg>
        </WinControls>
      </TitleBar>

      <MenuBar>
        {MENU.map(([label, key, w]) => (
          <MenuItem key={key} $w={w}>
            {label}(<u>{key}</u>)
          </MenuItem>
        ))}
      </MenuBar>

      <ToolRow $h={42} $line>
        <ToolGroup $w={1157} $line>
          <Tool $ml={3} $w={24}>{Icons.cascade}</Tool>
          <Caret $ml={12} />
          <Sep $ml={11} />
          <Tool $ml={5} $w={37} $on>{Icons.market}</Tool>
          <Tool $ml={9} $w={25}>{Icons.cross}</Tool>
          <Tool $ml={14} $w={27}>{Icons.folder}</Tool>
          <Tool $ml={14}>{Icons.nav}</Tool>
          <Tool $ml={15} $w={27}>{Icons.tester}</Tool>
          <Sep $ml={11} />
          <Tool $ml={10} $w={25}>{Icons.order}</Tool>
          <ToolLabel $ml={6} $w={57}>新订单</ToolLabel>
          <Tool $ml={11} $w={28}>{Icons.diamond}</Tool>
          <Tool $ml={16}>{Icons.db}</Tool>
          <Tool $ml={14}>{Icons.signal}</Tool>
          <Tool $ml={14}>{Icons.auto}</Tool>
          <ToolLabel $ml={8} $w={74}>自动交易</ToolLabel>
          <Grip $ml={9} />
          <Tool $ml={15}>{Icons.bars}</Tool>
          <Tool $ml={8} $w={38} $on>{Icons.candle}</Tool>
          <Tool $ml={11} $w={24}>{Icons.line}</Tool>
          <Sep $ml={9} />
          <Tool $ml={10}>{Icons.zoomIn}</Tool>
          <Tool $ml={15}>{Icons.zoomOut}</Tool>
          <Tool $ml={15} $w={25}>{Icons.tile}</Tool>
          <Sep $ml={13} />
          <Tool $ml={3} $w={38} $on>{Icons.scroll}</Tool>
          <Tool $ml={3} $w={39} $on>{Icons.shift}</Tool>
          <Sep $ml={3} />
          <Tool $ml={10}>{Icons.newChart}</Tool>
          <Caret $ml={9} />
          <Tool $ml={14}>{Icons.clock}</Tool>
          <Caret $ml={10} />
          <Tool $ml={14}>{Icons.template}</Tool>
          <Caret $ml={10} />
        </ToolGroup>
        <Tool $ml={493} $w={20}>{Icons.search}</Tool>
        <Tool $ml={18} $w={22}>{Icons.chat}</Tool>
      </ToolRow>
      <Badge>1</Badge>

      <ToolRow $h={39}>
        <ToolGroup $w={751}>
          <CutDash width="8" height="3" viewBox="0 0 8 3">
            <path d="M0 1.5h8" stroke="#5c5c5c" strokeWidth="2" />
          </CutDash>
          <Sep $ml={14} />
          <Tool $ml={9}>{Icons.vert}</Tool>
          <Tool $ml={16}>{Icons.horiz}</Tool>
          <Tool $ml={14}>{Icons.diag}</Tool>
          <Tool $ml={15}>{Icons.fibo}</Tool>
          <Tool $ml={15}>{Icons.gridF}</Tool>
          <Tool $ml={15}>{Icons.textA}</Tool>
          <Tool $ml={16}>{Icons.textT}</Tool>
          <Tool $ml={15}>{Icons.marks}</Tool>
          <Caret $ml={9} />
          <Grip $ml={12} />
          <TfStrip>
            {TIMEFRAMES.map((tf) => (
              <TfButton key={tf} $on={tf === "H1"}>
                {tf}
              </TfButton>
            ))}
          </TfStrip>
        </ToolGroup>
      </ToolRow>

      <Mdi>
        {WINDOWS.map((w, i) => (
          <ChartWindow key={w.name} data={w} seed={i * 977 + 131} />
        ))}
      </Mdi>

      <TabBar>
        <Tab $w={78} $pad={0}>
          <CutTabText>CAD,H1</CutTabText>
        </Tab>
        <Tab $w={140} $pad={16}>GBPUSD,H1</Tab>
        <Tab $w={140} $pad={15} $active>XAUUSD,H1</Tab>
        <Tab $w={140} $pad={17}>USDCHF,H1</Tab>
        <Tab $w={140} $pad={18}>EURUSD,H1</Tab>
        <Tab $w={145} $pad={16}>NZDUSD,H1</Tab>
        <TabArrows>
          <span>◂</span>
          <span>▸</span>
        </TabArrows>
      </TabBar>

      <StatusBar>
        <StatusCell $w={492}>动,请按F1键</StatusCell>
        <StatusCell $w={207} $pad={6}>Default</StatusCell>
        <StatusCell $w={178} />
        <StatusCell $w={124} />
        <StatusCell $w={122} />
        <StatusCell $w={119} />
        <StatusCell $w={120} />
        <ConnBar />
      </StatusBar>

      <Taskbar>
        <TaskItem $ml={3} $w={227} $pad={9}>
          <TaskTile $bg="#e21b1b">
            <svg width="35" height="37" viewBox="0 0 35 37">
              <path d="M5 6h25v25H5z" fill="#f4f4f4" />
              <path d="M19 6l6 13-9 2-4 10h-2l4-13 8-2-5-10z" fill="#e21b1b" />
            </svg>
          </TaskTile>
          1122072: DooPri...
        </TaskItem>
        <TaskItem $ml={15} $w={228} $pad={9}>
          <svg width="36" height="37" viewBox="0 0 36 37">
            <ellipse cx="14" cy="14" rx="14" ry="13" fill="#2dc14e" />
            <ellipse cx="26" cy="24" rx="10.5" ry="10" fill="#e6e6e6" />
            <circle cx="9" cy="11" r="1.8" fill="#127a2c" />
            <circle cx="18" cy="11" r="1.8" fill="#127a2c" />
            <circle cx="22" cy="22" r="1.4" fill="#666" />
            <circle cx="30" cy="22" r="1.4" fill="#666" />
          </svg>
          微信
        </TaskItem>
        <TaskItem $ml={14} $w={229} $pad={9}>
          <TaskTile $bg="#f6f8fb">
            <svg width="35" height="37" viewBox="0 0 35 37">
              <ellipse cx="17.5" cy="18.5" rx="14" ry="16" fill="#1f6fe0" />
              <path d="M22 6c-8 6-12 14-8 20 5 2 10-1 13-6-4 3-8 3-9 0-1-4 1-9 4-14z" fill="#e8f2ff" />
            </svg>
          </TaskTile>
          237.112 BNB/USD...
        </TaskItem>
        <TaskItem $ml={7} $w={240} $pad={16} $active>
          <TaskTile $bg="#1c2a58">We</TaskTile>
          6693643: WeTrad...
        </TaskItem>

        <Tray $ml={448}>
          <svg width="16" height="9" viewBox="0 0 16 9" fill="none">
            <path d="M1 8.5L8 1l7 7.5" stroke="#e8e8e8" />
          </svg>
        </Tray>
        <Tray $ml={30}>
          <svg width="24" height="25" viewBox="0 0 24 25">
            <ellipse cx="9.5" cy="10" rx="9.5" ry="9" fill="#2dc14e" />
            <ellipse cx="17" cy="17" rx="7" ry="7" fill="#e6e6e6" />
          </svg>
        </Tray>
        <Tray $ml={18} $size={21}>中</Tray>
        <Clock>
          <span>21:54</span>
          <span>2021/3/4</span>
        </Clock>
        <Tray $ml={31}>
          <svg width="24" height="24" viewBox="0 0 24 24" fill="none">
            <path d="M.5.5h23v18H15l-3 4-3-4H.5z" stroke="#e8e8e8" />
          </svg>
        </Tray>
        <TrayEdge />
      </Taskbar>

      <Circle $x={515} $y={150} width="202" height="62" viewBox="0 0 202 62" fill="none">
        <ellipse cx="101" cy="31" rx="97" ry="27" stroke="#e8141c" strokeWidth="4.5" />
      </Circle>
      <Circle $x={543} $y={618} width="172" height="98" viewBox="0 0 172 98" fill="none">
        <ellipse cx="86" cy="49" rx="82" ry="45" stroke="#e8141c" strokeWidth="4.5" transform="rotate(-4 86 49)" />
      </Circle>

      <Watermark>
        <svg width="36" height="46" viewBox="0 0 36 46">
          <circle cx="18" cy="18" r="17" fill="#fff" />
          <path d="M1 22h16l-2 3H3zM24 8L14 22h12L12 45l4-18H8z" fill="#2a2a2a" />
          <path d="M23 11l-7 10h9L13 42l3-16H10z" fill="#fff" />
        </svg>
        @只赢不止损
      </Watermark>
    </Page>
  );
}
